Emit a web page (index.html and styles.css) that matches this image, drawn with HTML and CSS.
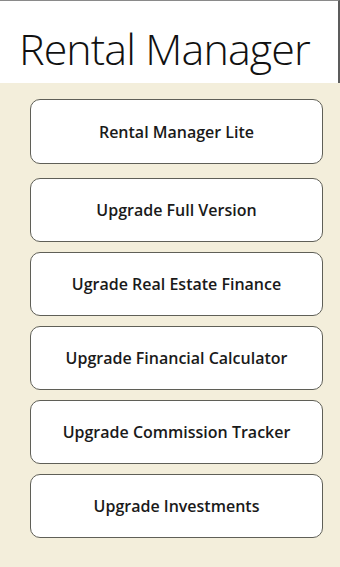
FILE: index.html
```html
<!DOCTYPE html>
<html>
<head>
<meta charset="utf-8">
<link rel="stylesheet" href="styles.css">
</head>
<body>
<div class="app">
  <header class="header">
    <h1 class="title">Rental Manager</h1>
  </header>
  <main class="content">
    <div class="menu">
      <button class="btn btn-first">Rental Manager Lite</button>
      <button class="btn">Upgrade Full Version</button>
      <button class="btn">Ugrade Real Estate Finance</button>
      <button class="btn">Upgrade Financial Calculator</button>
      <button class="btn">Upgrade Commission Tracker</button>
      <button class="btn">Upgrade Investments</button>
    </div>
  </main>
</div>
</body>
</html>
```

FILE: styles.css
```css
html, body {
  margin: 0;
  padding: 0;
  width: 340px;
  height: 567px;
  overflow: hidden;
  background: #f3eedb;
}
.app {
  display: flex;
  flex-direction: column;
  height: 567px;
}
.header {
  background: #ffffff;
  border-top: 1px solid #8a8a8a;
  border-right: 2px solid #5c5c5c;
  box-sizing: border-box;
  height: 83px;
  padding-left: 19px;
  display: flex;
  align-items: flex-start;
}
.title {
  margin: 0;
  padding-top: 20px;
  font-family: "Open Sans", "Noto Sans", sans-serif;
  font-weight: 300;
  font-size: 43px;
  line-height: 55px;
  color: #111111;
  letter-spacing: -0.9px;
}
.content {
  flex: 1;
  background: #f3eedb;
  padding-top: 16px;
  padding-left: 30px;
}
.menu {
  display: flex;
  flex-direction: column;
  gap: 10px;
  width: 293px;
}
.btn {
  height: 64px;
  background: #ffffff;
  border: 1.5px solid #5f5f57;
  border-radius: 10px;
  font-family: "Open Sans", "Noto Sans", sans-serif;
  font-weight: 600;
  font-size: 16px;
  color: #1a1a1a;
  padding: 0;
  display: flex;
  align-items: center;
  justify-content: center;
}
.btn-first {
  height: 65px;
  margin-bottom: 4px;
}
```
